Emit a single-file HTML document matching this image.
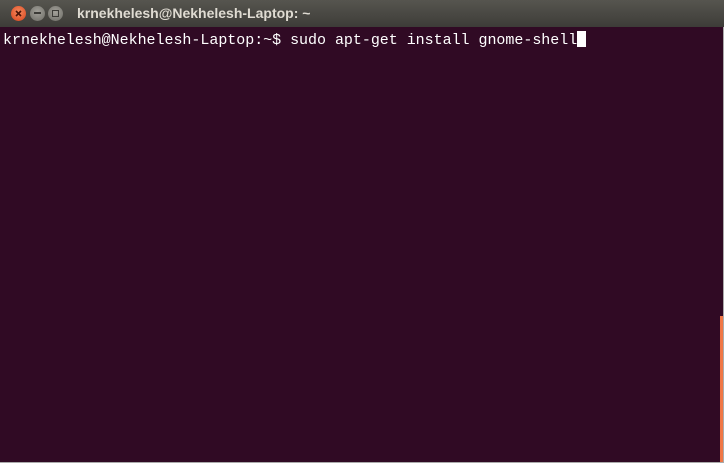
<!DOCTYPE html>
<html><head><style>
html,body{margin:0;padding:0;width:724px;height:463px;overflow:hidden;background:#3c3b37}
.tb{position:absolute;left:0;top:0;width:724px;height:27px;background:linear-gradient(#56554f,#3d3c38);}
.t{position:absolute;left:77px;top:5px;font:bold 14px "Liberation Sans",sans-serif;color:#dfdbd2}
.b{position:absolute;top:6px;width:15px;height:15px;border-radius:50%}
.term{position:absolute;left:0;top:27px;width:723px;height:435px;background:#300a24}
.line{position:absolute;left:3px;top:4px;font:15px "Liberation Mono",monospace;color:#fff;white-space:pre;letter-spacing:-0.03px}
.cur{display:inline-block;width:9px;height:16px;background:#fff;vertical-align:-3px}
.sb{position:absolute;left:720px;top:316px;width:3px;height:146px;background:#f07746}
.bot{position:absolute;left:0;top:462px;width:724px;height:1px;background:#aaa}
.rt{position:absolute;left:723px;top:27px;width:1px;height:436px;background:#aaa}
</style></head><body>
<div class="tb">
<div class="b" style="left:11px;background:radial-gradient(circle at 50% 40%,#f58a5e,#d9421b)"><svg width="15" height="15" style="position:absolute;left:0;top:0"><path d="M5 5L10 10M10 5L5 10" stroke="#4a1408" stroke-width="1.6"/></svg></div>
<div class="b" style="left:30px;background:radial-gradient(circle at 50% 40%,#a3a19a,#6c6b65)"><span style="position:absolute;left:4px;top:6px;width:7px;height:2px;background:#3c3b37"></span></div>
<div class="b" style="left:48px;background:radial-gradient(circle at 50% 40%,#a3a19a,#6c6b65)"><span style="position:absolute;left:4px;top:4px;width:5px;height:5px;border:1px solid #3c3b37"></span></div>
<div class="t">krnekhelesh@Nekhelesh-Laptop: ~</div>
</div>
<div class="term"><div class="line">krnekhelesh@Nekhelesh-Laptop:~$ sudo apt-get install gnome-shell<span class="cur"></span></div></div>
<div class="sb"></div><div class="rt"></div><div class="bot"></div>
</body></html>
